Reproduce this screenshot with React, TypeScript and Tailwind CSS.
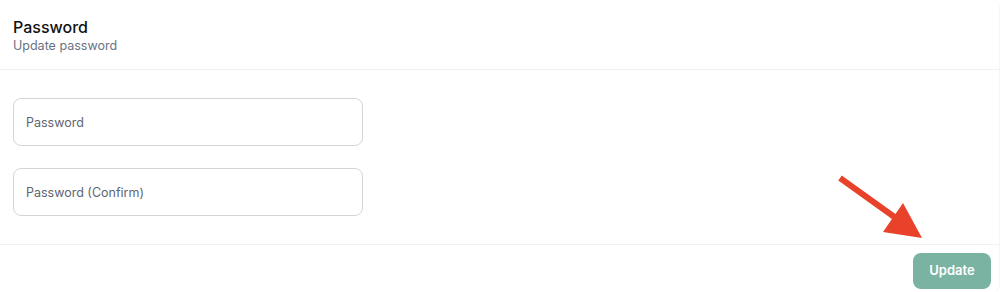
export default function App() {
  return (
    <div
      className="relative h-[292px] w-[1000px] overflow-hidden bg-white"
      style={{ fontFamily: 'Inter, "Liberation Sans", sans-serif' }}
    >
      <div className="h-full rounded-r-lg border-r border-[#f5f5f5]">
        <div className="h-[70px] border-b border-[#f1f1f1] px-[13px] pt-[17px]">
          <h2 className="text-[16px] font-medium leading-[20px] text-[#111]">Password</h2>
          <p className="text-[12.5px] leading-[17px] text-gray-500">Update password</p>
        </div>
        <div className="flex h-[175px] flex-col gap-[22px] border-b border-[#f1f1f1] px-[13px] pt-[28px]">
          <input
            type="password"
            placeholder="Password"
            className="h-[48px] w-[350px] rounded-lg border border-[#d4d4d4] px-[12px] text-[12.5px] text-gray-700 placeholder:text-[#5f6470] outline-none"
          />
          <input
            type="password"
            placeholder="Password (Confirm)"
            className="h-[48px] w-[350px] rounded-lg border border-[#d4d4d4] px-[12px] text-[12.5px] text-gray-700 placeholder:text-[#5f6470] outline-none"
          />
        </div>
        <div className="flex justify-end pr-[8px] pt-[8px]">
          <button className="h-[36px] w-[78px] rounded-lg bg-[#7bb3a3] text-[13px] font-semibold text-white">
            Update
          </button>
        </div>
      </div>
      <svg className="pointer-events-none absolute left-0 top-0" width="1000" height="292">
        <line x1="840" y1="178" x2="900" y2="221" stroke="#e8432a" strokeWidth="6" strokeLinecap="butt" />
        <polygon points="883,232 903,203 922,238" fill="#e8432a" />
      </svg>
    </div>
  )
}
